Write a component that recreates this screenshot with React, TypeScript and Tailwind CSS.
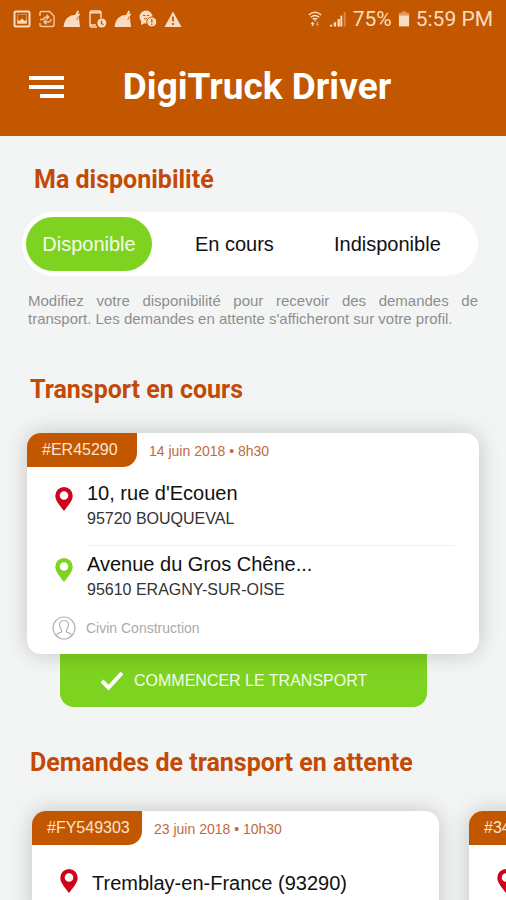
import { useState, type ReactNode } from "react";

// Shape of one stop (pickup or destination) of a transport
interface IStop {
  address: string;
  city?: string;
}

const AVAILABILITY = ["Disponible", "En cours", "Indisponible"];

// Small icons on the left side of the phone's status bar
function StatusIcons() {
  return (
    <div className="flex items-center gap-[7px]" aria-hidden="true">
      <svg width="18" height="18" viewBox="0 0 18 18" fill="none" stroke="currentColor" strokeWidth="2">
        <rect x="1.5" y="1.5" width="15" height="15" rx="1.5" />
        <path d="M4.500 13.500v-4l2 1.500 2.500-2.500 2.500 2.500 2-1.500v4z" fill="currentColor" stroke="none" />
        <path d="M4.500 4.500h9v9h-9z" strokeWidth=".8" opacity=".5" />
      </svg>
      <svg width="18" height="18" viewBox="0 0 18 18" fill="none" stroke="currentColor" strokeWidth="1.4" opacity=".85">
        <path d="M2 6V3q0-1.500 1.500-1.500h8L16 6v9q0 1.500-1.500 1.500h-11Q2 16.500 2 15v-2" />
        <path d="M2 9.500h3.500Q6 7 9 7h1M8.500 4.800 10.800 7 8.500 9.200M13 9q0 3-3.500 3H6M8.500 9.800 6 12l2.500 2.200" />
      </svg>
      <HillIcon />
      <svg width="19" height="18" viewBox="0 0 19 18" fill="none" stroke="currentColor" strokeWidth="1.4">
        <path d="M13 8V2.500Q13 1 11.500 1h-8Q2 1 2 2.500v13Q2 17 3.500 17H9" />
        <path d="M2 2.800h11M2 15h6" />
        <circle cx="13.800" cy="13" r="4.500" fill="currentColor" stroke="none" />
        <path d="M13.500 10.500v3l2 1.200" stroke="#c25700" strokeWidth="1.300" />
      </svg>
      <HillIcon />
      <svg width="18" height="18" viewBox="0 0 18 18" fill="currentColor">
        <circle cx="7" cy="7" r="6.500" />
        <path d="M2 11v4l4-2z" />
        <circle cx="12.800" cy="12" r="5" stroke="#c25700" strokeWidth="1" />
        <path d="M4 5.500h2.500M8 5.500h2M5 8.500q2 1.500 3-.5" fill="none" stroke="#c25700" strokeWidth="1" />
        <path d="M12.800 9v3.500M12.800 13.600v1.400" fill="none" stroke="#c25700" strokeWidth="1.300" />
      </svg>
      <svg width="18" height="18" viewBox="0 0 18 18" fill="currentColor">
        <path d="M9 1.500 17.500 17H.5z" />
        <path d="M9 6.500v5M9 13v2" stroke="#c25700" strokeWidth="1.800" />
      </svg>
    </div>
  );
}

function HillIcon() {
  return (
    <svg width="18" height="18" viewBox="0 0 18 18" fill="currentColor">
      <path d="M.5 17Q1 9 8 5.500l4-.5 2.500-4.500 1.500.7-1 2.800 2.500-.5-1.700 3L17 17z" />
      <path d="m15.200 6.500-1.400 3.500" stroke="#c25700" strokeWidth=".8" />
    </svg>
  );
}

function StatusBar() {
  return (
    <div className="flex h-[38px] items-center justify-between px-[13px] text-[#fbdcc0]">
      <StatusIcons />
      <div className="flex items-center gap-1.5 font-[Roboto,sans-serif] text-[21px] leading-6">
        <svg width="16" height="18" viewBox="0 0 18 18" fill="none" stroke="currentColor" strokeWidth="1.600" aria-hidden="true">
          <path d="M2 4.500Q9-1.500 16 4.500M4.200 7Q9 3 13.800 7M6.300 9.300q2.700-2 5.400 0" />
          <path d="M9 9.300v2.200" />
          <path d="M4 14.500 6.300 12l2.300 2.500H7.200V17H5.400v-2.500z" fill="currentColor" stroke="none" />
          <path d="M9.400 14.500h1.400V12h1.800v2.500H14L11.700 17z" fill="currentColor" opacity=".5" stroke="none" />
        </svg>
        <svg width="18" height="18" viewBox="0 0 19 18" fill="currentColor" aria-hidden="true">
          <path d="M1 15h2.500v2H1zM5 12.500h2.500V17H5zM9 9h2.500v8H9z" />
          <path d="M12 5.500h2V17h-2z" />
          <path d="M15.500 1.500h2V17h-2z" opacity=".4" />
        </svg>
        <span>75%</span>
        <svg width="12" height="18" viewBox="0 0 13 18" fill="currentColor" aria-hidden="true">
          <path d="M1 5h11v12H1z" />
          <path d="M4 .8h5v1.700h3V5H1V2.500h3z" opacity=".5" />
        </svg>
        <span>5:59 PM</span>
      </div>
    </div>
  );
}

function PinIcon({ color }: { color: string }) {
  return (
    <svg width="18" height="24" viewBox="0 0 18 24" aria-hidden="true">
      <path
        fill={color}
        fillRule="evenodd"
        d="M9 0a8.700 8.700 0 0 1 8.700 8.700C17.700 14 12.500 19 9 24 5.500 19 .3 14 .3 8.700A8.700 8.700 0 0 1 9 0zm0 4.200a4.300 4.300 0 1 0 0 8.600 4.300 4.300 0 0 0 0-8.600z"
      />
    </svg>
  );
}

function SectionTitle({ children }: { children: ReactNode }) {
  return <h2 className="font-[Roboto,sans-serif] text-[25px] font-bold leading-8 text-[#c24a06]">{children}</h2>;
}

// Orange reference tag and the date, shown on the top edge of every card
function CardHeader({ reference, date }: { reference: string; date: string }) {
  return (
    <div className="flex h-[34px] items-center gap-3 whitespace-nowrap">
      <span className="flex h-full w-[110px] items-center rounded-tl-[14px] rounded-br-[14px] bg-[#c25700] pl-[15px] text-[16px] text-[#fbe3d2]">
        {reference}
      </span>
      <span className="pt-0.5 text-[14px] text-[#bf6a3c]">{date}</span>
    </div>
  );
}

function Stop({ stop, color }: { stop: IStop; color: string }) {
  return (
    <div className="flex items-start gap-3.5 whitespace-nowrap">
      <div className={stop.city ? "shrink-0 pt-2" : "shrink-0"}>
        <PinIcon color={color} />
      </div>
      <div>
        <p className="text-[20px] leading-7 text-[#111]">{stop.address}</p>
        {stop.city && <p className="text-[16px] leading-6 text-[#333]">{stop.city}</p>}
      </div>
    </div>
  );
}

function RequestCard({ reference, date, stop }: { reference: string; date: string; stop: IStop }) {
  return (
    <article className="w-[407px] shrink-0 rounded-[14px] bg-white pb-8 shadow-[0_0_22px_rgba(0,0,0,0.2)]">
      <CardHeader reference={reference} date={date} />
      <div className="pl-7 pt-6">
        <Stop stop={stop} color="#d0021b" />
      </div>
    </article>
  );
}

export default function App() {
  const [availability, setAvailability] = useState("Disponible");

  return (
    <div className="flex h-screen flex-col overflow-hidden bg-[#f3f5f5] font-['Liberation_Sans',Arial,sans-serif]">
      <header className="shrink-0 bg-[#c25700]">
        <StatusBar />
        <div className="grid h-[98px] grid-cols-[64px_1fr_56px] items-center">
          <button type="button" aria-label="Menu" className="flex flex-col items-end gap-[5px] text-white">
            <span className="h-1 w-[35px] bg-white" />
            <span className="h-1 w-[35px] bg-white" />
            <span className="h-1 w-6 bg-white" />
          </button>
          <h1 className="whitespace-nowrap text-center font-[Roboto,sans-serif] text-[37px] font-bold leading-10 text-white">
            DigiTruck Driver
          </h1>
        </div>
      </header>

      <main className="flex-1 overflow-hidden">
        <section className="pl-[22px] pr-7 pt-7">
          <div className="pl-3">
            <SectionTitle>Ma disponibilité</SectionTitle>
          </div>

          <div className="mt-4 grid h-16 grid-cols-[126px_7fr_6fr] items-center rounded-full bg-white pl-1 pr-5 text-[20px]">
            {AVAILABILITY.map((item) => (
              <button
                key={item}
                type="button"
                aria-pressed={item === availability}
                onClick={() => setAvailability(item)}
                className={`h-[54px] rounded-full ${
                  item === availability ? "bg-[#7ed321] text-[#f4fbe9]" : "text-[#111]"
                }`}
              >
                {item}
              </button>
            ))}
          </div>

          <p className="mt-4 pl-1.5 text-justify text-[15px] leading-[18px] text-[#8e8e8e]">
            Modifiez votre disponibilité pour recevoir des demandes de transport. Les demandes en attente s'afficheront
            sur votre profil.
          </p>
        </section>

        <section className="px-[27px] pt-[46px]">
          <div className="pl-[3px]">
            <SectionTitle>Transport en cours</SectionTitle>
          </div>

          <article className="relative mt-[27px] rounded-[14px] bg-white pb-3.5 shadow-[0_0_22px_rgba(0,0,0,0.2)]">
            <CardHeader reference="#ER45290" date="14 juin 2018 • 8h30" />
            <div className="pl-7 pr-6">
              <div className="pb-3.5 pt-3">
                <Stop stop={{ address: "10, rue d'Ecouen", city: "95720 BOUQUEVAL" }} color="#d0021b" />
              </div>
              <hr className="ml-8 border-[#f0f0f0]" />
              <div className="pt-1">
                <Stop stop={{ address: "Avenue du Gros Chêne...", city: "95610 ERAGNY-SUR-OISE" }} color="#7ed321" />
              </div>
            </div>
            <div className="mt-3.5 flex items-center gap-2.5 pl-[25px] text-[14px] leading-6 text-[#aaa]">
              <svg width="24" height="24" viewBox="0 0 24 24" fill="none" stroke="#b5b5b5" strokeWidth="1.200" aria-hidden="true">
                <circle cx="12" cy="12" r="11" />
                <path d="M4.500 19.500q.5-2.200 4.700-3.300.8-.7.300-2.200Q7.500 12 7.500 8.500 7.700 4.500 12 4.500t4.500 4q0 3.500-2 5.500-.5 1.500.3 2.200 4.200 1.100 4.700 3.300" />
              </svg>
              Civin Construction
            </div>
          </article>

          <div className="pl-[33px] pr-[52px]">
            <button
              type="button"
              className="flex h-[53px] w-full items-center gap-2.5 whitespace-nowrap rounded-b-[14px] bg-[#7ed321] pl-10 text-[16px] text-[#f4fbe9]"
            >
              <svg className="shrink-0" width="24" height="20" viewBox="0 0 24 20" fill="none" stroke="#fff" strokeWidth="4" aria-hidden="true">
                <path d="m2 10 6.500 6.500L22 2" />
              </svg>
              COMMENCER LE TRANSPORT
            </button>
          </div>
        </section>

        <section className="pt-10">
          <div className="pl-[30px]">
            <SectionTitle>Demandes de transport en attente</SectionTitle>
          </div>
          <div className="mt-8 flex gap-[30px] pl-8">
            <RequestCard reference="#FY549303" date="23 juin 2018 • 10h30" stop={{ address: "Tremblay-en-France (93290)" }} />
            <RequestCard reference="#345290" date="25 juin 2018 • 9h00" stop={{ address: "Gonesse (95500)" }} />
          </div>
        </section>
      </main>
    </div>
  );
}
